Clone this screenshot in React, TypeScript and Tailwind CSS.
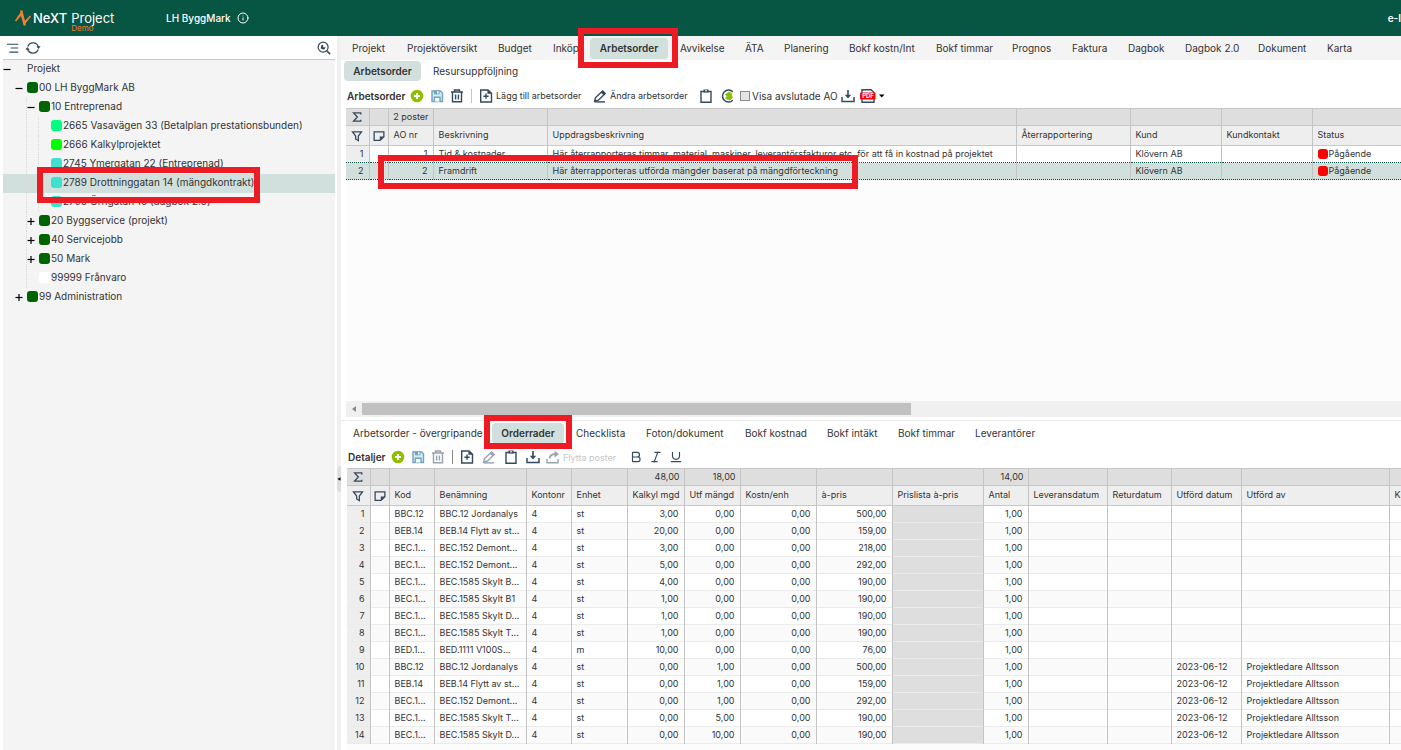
import type { ReactNode } from 'react';
import clsx from 'clsx';
import { Bold, Info, Italic, Underline } from 'lucide-react';

interface TreeItem {
  level: number;
  label: string;
  color?: string;
  toggle?: 'open' | 'closed';
  selected?: boolean;
}

interface Tab {
  label: string;
  width: string;
  active?: boolean;
}

interface Column {
  label: string;
  width: string;
  sum?: string;
  numeric?: boolean;
  locked?: boolean;
}

const TREE: TreeItem[] = [
  { level: 0, label: 'Projekt', toggle: 'open' },
  { level: 1, label: '00 LH ByggMark AB', color: 'bg-[#006400]', toggle: 'open' },
  { level: 2, label: '10 Entreprenad', color: 'bg-[#006400]', toggle: 'open' },
  { level: 3, label: '2665 Vasavägen 33 (Betalplan prestationsbunden)', color: 'bg-[#00ff7f]' },
  { level: 3, label: '2666 Kalkylprojektet', color: 'bg-[#00ff00]' },
  { level: 3, label: '2745 Ymergatan 22 (Entreprenad)', color: 'bg-[#40e0d0]' },
  { level: 3, label: '2789 Drottninggatan 14 (mängdkontrakt)', color: 'bg-[#40e0d0]', selected: true },
  { level: 3, label: '2790 Örngatan 10 (dagbok 2.0)', color: 'bg-[#40e0d0]' },
  { level: 2, label: '20 Byggservice (projekt)', color: 'bg-[#006400]', toggle: 'closed' },
  { level: 2, label: '40 Servicejobb', color: 'bg-[#006400]', toggle: 'closed' },
  { level: 2, label: '50 Mark', color: 'bg-[#006400]', toggle: 'closed' },
  { level: 2, label: '99999 Frånvaro', color: 'bg-white' },
  { level: 1, label: '99 Administration', color: 'bg-[#006400]', toggle: 'closed' },
];

const MAIN_TABS: Tab[] = [
  { label: 'Projekt', width: 'w-[55px]' },
  { label: 'Projektöversikt', width: 'w-[91px]' },
  { label: 'Budget', width: 'w-[55px]' },
  { label: 'Inköp', width: 'w-[37px]' },
  { label: 'Arbetsorder', width: 'w-[78px]', active: true },
  { label: 'Avvikelse', width: 'w-[65px]' },
  { label: 'ÄTA', width: 'w-[39px]' },
  { label: 'Planering', width: 'w-[65px]' },
  { label: 'Bokf kostn/Int', width: 'w-[87px]' },
  { label: 'Bokf timmar', width: 'w-[76px]' },
  { label: 'Prognos', width: 'w-[60px]' },
  { label: 'Faktura', width: 'w-[56px]' },
  { label: 'Dagbok', width: 'w-[57px]' },
  { label: 'Dagbok 2.0', width: 'w-[73px]' },
  { label: 'Dokument', width: 'w-[69px]' },
  { label: 'Karta', width: 'w-[50px]' },
];

const DETAIL_TABS: Tab[] = [
  { label: 'Arbetsorder - övergripande', width: 'w-[139px]' },
  { label: 'Orderrader', width: 'w-[72px]', active: true },
  { label: 'Checklista', width: 'w-[70px]' },
  { label: 'Foton/dokument', width: 'w-[99px]' },
  { label: 'Bokf kostnad', width: 'w-[82px]' },
  { label: 'Bokf intäkt', width: 'w-[71px]' },
  { label: 'Bokf timmar', width: 'w-[77px]' },
  { label: 'Leverantörer', width: 'w-[80px]' },
];

const ORDER_COLUMNS: Column[] = [
  { label: 'AO nr', width: 'w-[45px]', sum: '2 poster', numeric: true },
  { label: 'Beskrivning', width: 'w-[114px]' },
  { label: 'Uppdragsbeskrivning', width: 'w-[469px]' },
  { label: 'Återrapportering', width: 'w-[114px]' },
  { label: 'Kund', width: 'w-[91px]' },
  { label: 'Kundkontakt', width: 'w-[91px]' },
  { label: 'Status', width: '' },
];

const ORDERS = [
  [
    '1',
    'Tid & kostnader',
    'Här återrapporteras timmar, material, maskiner, leverantörsfakturor etc. för att få in kostnad på projektet',
    '',
    'Klövern AB',
    '',
    'Pågående',
  ],
  [
    '2',
    'Framdrift',
    'Här återrapporteras utförda mängder baserat på mängdförteckning',
    '',
    'Klövern AB',
    '',
    'Pågående',
  ],
];

const DETAIL_COLUMNS: Column[] = [
  { label: 'Kod', width: 'w-[45px]' },
  { label: 'Benämning', width: 'w-[92px]' },
  { label: 'Kontonr', width: 'w-[45px]' },
  { label: 'Enhet', width: 'w-[56px]' },
  { label: 'Kalkyl mgd', width: 'w-[57px]', sum: '48,00', numeric: true },
  { label: 'Utf mängd', width: 'w-[56px]', sum: '18,00', numeric: true },
  { label: 'Kostn/enh', width: 'w-[76px]', numeric: true },
  { label: 'à-pris', width: 'w-[76px]', numeric: true },
  { label: 'Prislista à-pris', width: 'w-[91px]', locked: true },
  { label: 'Antal', width: 'w-[45px]', sum: '14,00', numeric: true },
  { label: 'Leveransdatum', width: 'w-[79px]' },
  { label: 'Returdatum', width: 'w-[64px]' },
  { label: 'Utförd datum', width: 'w-[70px]' },
  { label: 'Utförd av', width: 'w-[148px]' },
  { label: 'K', width: '' },
];

const detail = (
  code: string,
  name: string,
  unit: string,
  planned: string,
  done: string,
  price: string,
  date = '',
  by = '',
) => [code, name, '4', unit, planned, done, '0,00', price, '', '1,00', '', '', date, by, ''];

const LEADER = 'Projektledare Alltsson';
const DONE_DATE = '2023-06-12';

const DETAILS = [
  detail('BBC.12', 'BBC.12 Jordanalys', 'st', '3,00', '0,00', '500,00'),
  detail('BEB.14', 'BEB.14 Flytt av st...', 'st', '20,00', '0,00', '159,00'),
  detail('BEC.1...', 'BEC.152 Demont...', 'st', '3,00', '0,00', '218,00'),
  detail('BEC.1...', 'BEC.152 Demont...', 'st', '5,00', '0,00', '292,00'),
  detail('BEC.1...', 'BEC.1585 Skylt B...', 'st', '4,00', '0,00', '190,00'),
  detail('BEC.1...', 'BEC.1585 Skylt B1', 'st', '1,00', '0,00', '190,00'),
  detail('BEC.1...', 'BEC.1585 Skylt D...', 'st', '1,00', '0,00', '190,00'),
  detail('BEC.1...', 'BEC.1585 Skylt T...', 'st', '1,00', '0,00', '190,00'),
  detail('BED.1...', 'BED.1111 V100S...', 'm', '10,00', '0,00', '76,00'),
  detail('BBC.12', 'BBC.12 Jordanalys', 'st', '0,00', '1,00', '500,00', DONE_DATE, LEADER),
  detail('BEB.14', 'BEB.14 Flytt av st...', 'st', '0,00', '1,00', '159,00', DONE_DATE, LEADER),
  detail('BEC.1...', 'BEC.152 Demont...', 'st', '0,00', '1,00', '292,00', DONE_DATE, LEADER),
  detail('BEC.1...', 'BEC.1585 Skylt T...', 'st', '0,00', '5,00', '190,00', DONE_DATE, LEADER),
  detail('BEC.1...', 'BEC.1585 Skylt D...', 'st', '0,00', '10,00', '190,00', DONE_DATE, LEADER),
];

/* Red frame pointing out a step in the guide */
function Marker({ className }: { className: string }) {
  return <span className={clsx('pointer-events-none absolute z-20 border-6 border-[#ed1c24]', className)} />;
}

function Glyph({ className, children }: { className?: string; children: ReactNode }) {
  return (
    <svg
      viewBox="0 0 16 16"
      fill="none"
      stroke="currentColor"
      strokeWidth="1.4"
      className={clsx('shrink-0', className ?? 'size-4')}
      aria-hidden="true"
    >
      {children}
    </svg>
  );
}

function AddIcon() {
  return (
    <Glyph className="size-4 text-white">
      <circle cx="8" cy="8" r="6.3" fill="#8fbe00" stroke="none" />
      <path d="M8 5v6M5 8h6" strokeWidth="1.8" />
    </Glyph>
  );
}

function SaveIcon() {
  return (
    <Glyph className="size-4 text-[#6fa3c0]">
      <path d="M3 3h8.5L13.500 5v8.500H3z" fill="#d9e9f1" />
      <path d="M5 2.500h5.500v3.800H5z" fill="currentColor" stroke="none" />
      <path d="M8 3.200h1.500v2.200H8z" fill="#fff" stroke="none" />
      <path d="M5.400 13.500V9.200h5.600v4.300" fill="#fff" />
    </Glyph>
  );
}

function TrashIcon() {
  return (
    <Glyph>
      <path d="M2 4h12M5.5 3.6V2h5v1.6M3.5 4.2v9.6h9V4.2M6.6 6.5v5M9.4 6.5v5" />
    </Glyph>
  );
}

function FilePlusIcon() {
  return (
    <Glyph>
      <path d="M2.7 2h7.3l3.5 3.3V14H2.7zM8 5.6v5.2M5.4 8.2h5.2" />
      <path d="M9.700 2.200l3.600 3.400H9.700z" fill="currentColor" strokeWidth="0.500" />
    </Glyph>
  );
}

function PencilIcon() {
  return (
    <Glyph>
      <path d="M2.600 13l1-3.400L10.600 3l2.600 2.500-6.800 6.700z" />
      <path d="M8.800 4.600l3 2.900 1.600-1.700L10.600 3z" fill="currentColor" stroke="none" />
      <path d="M2.500 13.900H13" />
    </Glyph>
  );
}

function ClipboardIcon() {
  return (
    <Glyph>
      <path d="M3 3.500h10V14.200H3z" />
      <path d="M5.500 1.500h5v3h-5z" fill="currentColor" stroke="none" />
      <path d="M7 2.800h2" stroke="#fff" strokeWidth="1" />
    </Glyph>
  );
}

function DownloadIcon() {
  return (
    <Glyph>
      <path d="M2 9v4.5h12V9" strokeWidth="1.5" />
      <path d="M8 2v6" strokeWidth="1.6" />
      <path d="M4.8 6.8h6.4L8 10.4z" fill="currentColor" stroke="none" />
    </Glyph>
  );
}

function MoveIcon() {
  return (
    <Glyph>
      <path d="M2 10v3.7h11V10" />
      <path d="M4.5 9.5C5 6.5 7 5.2 10 5.2" strokeWidth="1.8" />
      <path d="M9.5 1.8L14 5.2 9.5 8.6z" fill="currentColor" stroke="none" />
    </Glyph>
  );
}

function EuroIcon() {
  return (
    <Glyph>
      <path d="M12.800 3.800A6 6 0 1 0 12.800 12.200" strokeWidth="1.500" />
      <path d="M9 4l3 1.500-1 1.500 1.500 2.500L10 12 5.500 10.500 7 8.500 5.500 6.500z" fill="#8fbe00" stroke="#8fbe00" strokeWidth="0.800" />
    </Glyph>
  );
}

function PdfIcon() {
  return (
    <svg viewBox="0 0 16 16" className="size-4 shrink-0" aria-hidden="true">
      <path d="M2 5V1.700h9L14 4.500V14.300H2V5" fill="#fff" stroke="#34495e" strokeWidth="1.400" />
      <rect x="0" y="4.500" width="15.500" height="7" rx="1" fill="#ff0000" />
      <text x="8" y="10.300" fill="#fff" fontSize="6" fontWeight="700" textAnchor="middle">
        PDF
      </text>
    </svg>
  );
}

function ToolButton({
  label,
  className,
  disabled,
  children,
}: {
  label: string;
  className?: string;
  disabled?: boolean;
  children: ReactNode;
}) {
  return (
    <button
      type="button"
      aria-label={label}
      disabled={disabled}
      className={clsx('flex shrink-0 items-center text-[#34495e] disabled:opacity-50', className)}
    >
      {children}
    </button>
  );
}

function TabButton({ tab, marker }: { tab: Tab; marker: string }) {
  if (!tab.active) {
    return (
      <button type="button" className={clsx('shrink-0 text-left whitespace-nowrap', tab.width)}>
        {tab.label}
      </button>
    );
  }
  return (
    <div className={clsx('relative mr-3 shrink-0', tab.width)}>
      <button type="button" className="h-[21px] w-full rounded bg-[#d1e0dc] font-semibold">
        {tab.label}
      </button>
      <Marker className={marker} />
    </div>
  );
}

function GridHead({ columns }: { columns: Column[] }) {
  return (
    <>
      <colgroup>
        <col className="w-[23px]" />
        <col className="w-[19px]" />
        {columns.map((c) => (
          <col key={c.label} className={c.width} />
        ))}
      </colgroup>
      <thead className="text-[#34495e]">
        <tr className="h-[17px] bg-[#dedede]">
          <td className="border-r border-[#c4c4c4]">
            <Glyph className="mx-auto size-3">
              <path d="M13 4.500V2.500H3.500L8.500 8l-5 5.500H13v-2" strokeWidth="1.800" />
            </Glyph>
          </td>
          <td className="border-r border-[#c4c4c4]" />
          {columns.map((c) => (
            <td
              key={c.label}
              className={clsx(
                'border-r border-[#c4c4c4] px-1 whitespace-nowrap text-[#333] last:border-r-0',
                c.numeric && 'text-right',
              )}
            >
              {c.sum}
            </td>
          ))}
        </tr>
        <tr className="h-5 border-y border-[#c8c8c8] bg-[#eeeeee]">
          <th className="border-r border-[#c4c4c4]">
            <Glyph className="mx-auto size-3">
              <path d="M2 2.500h12L9.800 8v6.200L6.200 12V8z" strokeWidth="1.700" />
            </Glyph>
          </th>
          <th className="border-r border-[#c4c4c4]">
            <Glyph className="mx-auto size-3">
              <path d="M1.500 2.500h13V9l-5 4.800h-8z" strokeWidth="1.700" />
              <path d="M9 14V8.500h5.500z" fill="currentColor" stroke="none" />
            </Glyph>
          </th>
          {columns.map((c) => (
            <th
              key={c.label}
              className="border-r border-[#c4c4c4] pb-0.5 pl-[5px] text-left font-normal whitespace-nowrap text-[#333] last:border-r-0"
            >
              {c.label}
            </th>
          ))}
        </tr>
      </thead>
    </>
  );
}

function Sidebar() {
  return (
    <aside className="flex w-[335px] shrink-0 flex-col pl-[3px]">
      <div className="flex h-6 shrink-0 items-center gap-1.5 border-b border-[#c8c8c8] px-1">
        <ToolButton label="Visa meny">
          <Glyph className="size-3">
            <path d="M0 3h15M5 8h10M3 13.500h12" strokeWidth="1.600" />
          </Glyph>
        </ToolButton>
        <ToolButton label="Uppdatera">
          <Glyph>
            <path d="M2.800 6.500A5.600 5.600 0 0 1 13.400 7M13.200 9.500A5.600 5.600 0 0 1 2.600 9" strokeWidth="1.300" />
            <path d="M11.400 6.200h4.200l-2 2.800zM4.600 9.800H.4l2-2.800z" fill="currentColor" stroke="none" />
          </Glyph>
        </ToolButton>
        <ToolButton label="Sök projekt" className="ml-auto">
          <Glyph className="size-3.5">
            <circle cx="7" cy="7" r="5.700" />
            <path d="M11.200 11.200L15 15" strokeWidth="1.800" />
            <path d="M7 7V4.300A2.700 2.700 0 1 0 9.700 7z" fill="currentColor" stroke="none" />
          </Glyph>
        </ToolButton>
      </div>
      <ul className="flex-1 bg-[#f4f4f4] text-[10px]">
        {TREE.map((item) => (
          <li
            key={item.label}
            className={clsx('relative flex h-[19px] items-center', item.selected && 'bg-[#d1e0dc]')}
          >
            {/* Guide lines for the nested levels */}
            {Array.from({ length: item.level }, (_, i) => (
              <span
                key={i}
                className={clsx(
                  'h-full w-3 shrink-0',
                  i > 0 && 'border-r border-dotted border-[#d8d8d8]',
                )}
              />
            ))}
            <button type="button" className="flex items-center pb-0.5 whitespace-nowrap">
              <Glyph className="mr-1 size-2 text-black">
                {item.toggle && <path d="M1 9h14" strokeWidth="2.400" />}
                {item.toggle === 'closed' && <path d="M8 2v14" strokeWidth="2.400" />}
              </Glyph>
              <span className={clsx('mr-px size-[11px] shrink-0 rounded-[3px]', item.color)} />
              {item.label}
            </button>
            {item.selected && <Marker className="-top-[7px] left-[34px] h-9 w-[223px]" />}
          </li>
        ))}
      </ul>
    </aside>
  );
}

function OrdersPane() {
  return (
    <section className="flex min-h-0 flex-[385_1_0%] flex-col border-b border-[#ebebeb]">
      <nav className="flex h-6 shrink-0 items-center bg-[#f4f4f4] pl-[11px] text-[10px]">
        {MAIN_TABS.map((tab) => (
          <TabButton key={tab.label} tab={tab} marker="-left-3 -right-2.5 -top-2.5 h-10" />
        ))}
      </nav>
      <div className="flex h-6 shrink-0 items-center gap-3 pb-0.5 pl-[3px] text-[10px]">
        <button type="button" className="h-5 w-[77px] rounded bg-[#d1e0dc] font-semibold">
          Arbetsorder
        </button>
        <button type="button">Resursuppföljning</button>
      </div>
      <div className="flex h-6 shrink-0 items-center pl-1.5 text-[9px]">
        <h2 className="w-[62px] text-[10px] font-semibold">Arbetsorder</h2>
        <ToolButton label="Ny arbetsorder"><AddIcon /></ToolButton>
        <ToolButton label="Spara" className="ml-1"><SaveIcon /></ToolButton>
        <ToolButton label="Ta bort" className="ml-1"><TrashIcon /></ToolButton>
        <span className="mx-1.5 h-3.5 w-px bg-[#c4c4c4]" />
        <ToolButton label="Lägg till arbetsorder" className="w-[114px] gap-0.5 whitespace-nowrap">
          <FilePlusIcon />
          <span className="text-[#333]">Lägg till arbetsorder</span>
        </ToolButton>
        <ToolButton label="Ändra arbetsorder" className="w-[106px] gap-0.5 whitespace-nowrap">
          <PencilIcon />
          <span className="text-[#333]">Ändra arbetsorder</span>
        </ToolButton>
        <ToolButton label="Klistra in"><ClipboardIcon /></ToolButton>
        <ToolButton label="Valuta" className="ml-1.5"><EuroIcon /></ToolButton>
        <label className="ml-1 flex w-[100px] items-center gap-0.5 text-[10px] whitespace-nowrap">
          <input
            type="checkbox"
            className="size-2.5 shrink-0 appearance-none border border-[#8a8a8a] bg-[#e4e4e4]"
          />
          Visa avslutade AO
        </label>
        <ToolButton label="Ladda ner"><DownloadIcon /></ToolButton>
        <ToolButton label="Skapa PDF" className="ml-1 gap-0.5">
          <PdfIcon />
          <Glyph className="size-2 text-black">
            <path d="M2 5h11L7.500 11z" fill="currentColor" stroke="none" />
          </Glyph>
        </ToolButton>
      </div>
      <div className="ml-[5px] min-h-0 flex-1 bg-[#fcfcfc]">
        <table className="w-full table-fixed border-collapse border-t border-[#c8c8c8] text-[9px] leading-3">
          <GridHead columns={ORDER_COLUMNS} />
          <tbody>
            {ORDERS.map((row, r) => {
              const selected = r === 1;
              return (
                <tr
                  key={row[0]}
                  className={clsx(
                    'h-[17px]',
                    selected ? 'border-y border-dotted border-[#0b5345] bg-[#d1e0dc]' : 'bg-white',
                  )}
                >
                  <td
                    className={clsx(
                      'border-r border-[#c4c4c4] pr-[5px] text-right',
                      !selected && 'bg-[#eeeeee]',
                    )}
                  >
                    {row[0]}
                  </td>
                  <td className="relative border-r border-[#c4c4c4]">
                    {selected && <Marker className="-top-2 left-2 h-[34px] w-[480px]" />}
                  </td>
                  {row.map((cell, c) => (
                    <td
                      key={ORDER_COLUMNS[c].label}
                      className={clsx(
                        'border-r border-[#c4c4c4] px-[5px] whitespace-nowrap last:border-r-0',
                        ORDER_COLUMNS[c].numeric && 'text-right',
                      )}
                    >
                      {c === 6 ? (
                        <span className="flex items-center gap-px">
                          <span className="size-2.5 rounded-[3px] bg-[#ff0000]" />
                          {cell}
                        </span>
                      ) : (
                        cell
                      )}
                    </td>
                  ))}
                </tr>
              );
            })}
          </tbody>
        </table>
      </div>
      <div className="mb-[3px] ml-[5px] flex h-4 shrink-0 items-center bg-[#f0f0f0]">
        <Glyph className="mx-1 size-2 text-[#8a8a8a]">
          <path d="M12 2v12L4 8z" fill="currentColor" stroke="none" />
        </Glyph>
        <span className="h-3 w-[52%] bg-[#c1c1c1]" />
      </div>
    </section>
  );
}

function DetailsPane() {
  return (
    <section className="flex min-h-0 flex-[329_1_0%] flex-col">
      <nav className="flex h-[25px] shrink-0 items-center pl-3 text-[10px]">
        {DETAIL_TABS.map((tab) => (
          <TabButton key={tab.label} tab={tab} marker="-inset-x-2 -top-2 h-[34px]" />
        ))}
      </nav>
      <div className="flex h-[22px] shrink-0 items-center pl-[7px] text-[9px]">
        <h2 className="w-[42px] text-[10px] font-semibold">Detaljer</h2>
        <ToolButton label="Ny rad"><AddIcon /></ToolButton>
        <ToolButton label="Spara rader" className="ml-1"><SaveIcon /></ToolButton>
        <ToolButton label="Ta bort rad" className="ml-1" disabled><TrashIcon /></ToolButton>
        <span className="mx-1.5 h-3.5 w-px bg-[#8a8a8a]" />
        <ToolButton label="Lägg till rad"><FilePlusIcon /></ToolButton>
        <ToolButton label="Ändra rad" className="ml-1.5" disabled><PencilIcon /></ToolButton>
        <ToolButton label="Klistra in rad" className="ml-1.5"><ClipboardIcon /></ToolButton>
        <ToolButton label="Ladda ner rader" className="ml-1.5"><DownloadIcon /></ToolButton>
        <ToolButton label="Flytta poster" className="ml-1 w-[84px] gap-0.5 whitespace-nowrap" disabled>
          <MoveIcon />
          <span className="text-[#8a8a8a]">Flytta poster</span>
        </ToolButton>
        <ToolButton label="Fet"><Bold className="size-3.5" /></ToolButton>
        <ToolButton label="Kursiv" className="ml-1.5"><Italic className="size-3.5" /></ToolButton>
        <ToolButton label="Understruken" className="ml-1.5"><Underline className="size-3.5" /></ToolButton>
      </div>
      <div className="ml-1.5 min-h-0 flex-1 overflow-hidden bg-[#fcfcfc]">
        <table className="w-full table-fixed border-collapse border-t border-[#c8c8c8] text-[9px] leading-3">
          <GridHead columns={DETAIL_COLUMNS} />
          <tbody>
            {DETAILS.map((row, r) => (
              <tr
                key={r}
                className={clsx('h-[17px] border-b border-[#ebebeb]', r % 2 ? 'bg-[#fafafa]' : 'bg-white')}
              >
                <td className="border-r border-[#c4c4c4] bg-[#eeeeee] pr-[5px] text-right">{r + 1}</td>
                <td className="border-r border-[#c4c4c4]" />
                {row.map((cell, c) => (
                  <td
                    key={DETAIL_COLUMNS[c].label}
                    className={clsx(
                      'border-r border-[#c4c4c4] px-[5px] whitespace-nowrap last:border-r-0',
                      DETAIL_COLUMNS[c].numeric && 'text-right',
                      DETAIL_COLUMNS[c].locked && 'bg-[#dedede]',
                    )}
                  >
                    {cell}
                  </td>
                ))}
              </tr>
            ))}
          </tbody>
        </table>
      </div>
    </section>
  );
}

export default function App() {
  return (
    <div className="flex h-screen flex-col overflow-hidden bg-white font-['Inter','Liberation_Sans',sans-serif] text-[#333]">
      <header className="flex h-9 shrink-0 items-center bg-[#075543] pl-[15px] text-white">
        <svg viewBox="0 0 16 18" className="h-[18px] w-4" fill="none" aria-hidden="true">
          <path d="M0.500 12L6 5.500 9.500 13.500 15.500 7" stroke="#f47b30" strokeWidth="1.600" />
          <path d="M5 1.500h2.500L11 16.500H8.500z" fill="#f47b30" />
          <path d="M7.200 1L2 8.500 0.500 12 6.500 6zM8.800 17l4-5.500L15.500 7 10 12z" fill="#f47b30" />
        </svg>
        <a href="#" className="flex w-[135px] items-start pl-0.5 text-[13px] leading-none font-medium">
          NeXT
          <span className="relative ml-1 font-normal">
            Project
            <span className="absolute top-3 left-0 text-[8px] leading-none text-[#f47b30]">Demo</span>
          </span>
        </a>
        <span className="text-[10px] font-medium">LH ByggMark</span>
        <button type="button" aria-label="Information" className="ml-1.5">
          <Info className="size-3" />
        </button>
        <a href="#" className="ml-auto text-[10px] font-semibold">
          e-I
        </a>
      </header>
      <div className="flex min-h-0 flex-1">
        <Sidebar />
        <div className="relative ml-0.5 w-1 shrink-0 bg-[#f0f0f0]">
          <button
            type="button"
            aria-label="Dölj projektträd"
            className="absolute top-[430px] left-0 h-[26px] w-1 rounded-l bg-[#dedede] text-black"
          >
            <Glyph className="size-1">
              <path d="M14 1v14L2 8z" fill="currentColor" stroke="none" />
            </Glyph>
          </button>
        </div>
        <main className="flex min-w-0 flex-1 flex-col">
          <OrdersPane />
          <DetailsPane />
        </main>
      </div>
    </div>
  );
}
